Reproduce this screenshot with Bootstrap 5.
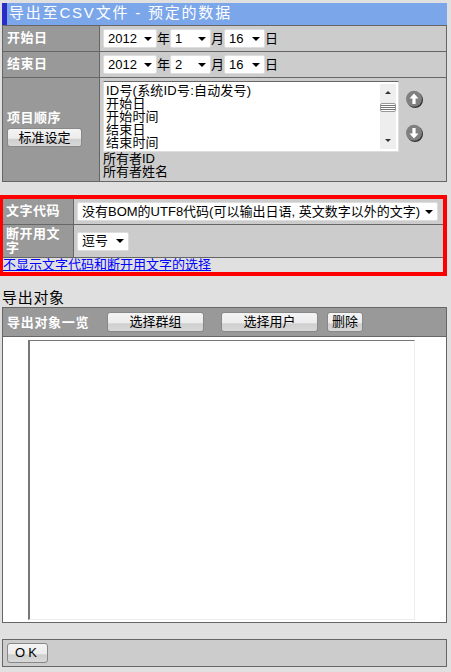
<!DOCTYPE html>
<html lang="zh">
<head>
  <meta charset="UTF-8">
  <meta name="viewport" content="width=device-width, initial-scale=1.0">
  <title>导出至CSV文件</title>
  <link href="https://cdn.jsdelivr.net/npm/bootstrap@5.3.0/dist/css/bootstrap.min.css" rel="stylesheet">
  <style>
    body {
      background-color: #e0e0e0;
      color: #000;
      font-family: "Liberation Sans", "Noto Sans CJK SC", sans-serif;
      font-size: 13px;
      line-height: 13px;
      padding: 3px 4px 0 2px;
      overflow: hidden;
    }
    .page-title {
      height: 22px;
      background-color: #7ba6ea;
      border-left: 5px solid #2b2bc8;
      color: #fff;
      font-size: 15px;
      line-height: 20px;
      letter-spacing: 1.8px;
      padding-left: 2px;
    }
    .form-tbl {
      border: 1px solid #666;
      background-color: #ccc;
    }
    .form-row {
      display: flex;
      border-bottom: 1px solid #666;
    }
    .form-row:last-child { border-bottom: 0; }
    .form-label-cell {
      flex: 0 0 97px;
      background-color: #999;
      border-right: 1px solid #666;
      color: #fff;
      font-weight: bold;
      padding-left: 4px;
      letter-spacing: .5px;
    }
    .label-mid { padding-bottom: 2px; }
    .form-value-cell { flex: 1 1 auto; min-width: 0; padding-left: 3px; background-color: #ccc; }
    .row-date { height: 26px; }
    .sel {
      appearance: none;
      -webkit-appearance: none;
      height: 19px;
      border: 1px solid #ddd;
      border-radius: 2px;
      padding: 0 0 0 4px;
      font-family: inherit;
      font-size: 13px;
      line-height: 16px;
      color: #000;
      background: #fff url("data:image/svg+xml,%3Csvg xmlns='http://www.w3.org/2000/svg' width='8' height='4'%3E%3Cpath d='M0 0h8L4 4z' fill='%23000'/%3E%3C/svg%3E") no-repeat right 4px center;
    }
    .sel-year { width: 54px; }
    .sel-num { width: 41px; }
    .sel-wide { width: 361px; }
    .sel-short { width: 52px; }
    .date-unit { width: 13px; text-align: center; }
    .row-order { height: 103px; }
    .order-label { padding-top: 33px; }
    .order-cell { padding-top: 3px; }
    .order-list {
      width: 296px;
      height: 71px;
      background-color: #fff;
      border: 1px solid #ddd;
      border-top-color: #666;
      padding: 2px 3px 3px 2px;
      position: relative;
      letter-spacing: .2px;
    }
    .list-scroll {
      position: absolute;
      right: 2px;
      top: 2px;
      bottom: 2px;
      width: 16px;
      background-color: #eee;
    }
    .scroll-up, .scroll-down {
      position: absolute;
      left: 5px;
      width: 0;
      height: 0;
      border-left: 3px solid transparent;
      border-right: 3px solid transparent;
    }
    .scroll-up { top: 7px; border-bottom: 3px solid #333; }
    .scroll-down { bottom: 7px; border-top: 3px solid #333; }
    .scroll-thumb {
      position: absolute;
      left: 0;
      top: 19px;
      width: 16px;
      height: 9px;
      border: 1px solid #999;
      border-radius: 2px;
      background: repeating-linear-gradient(#fff 0, #fff 1px, #777 1px, #777 2px);
    }
    .move-btns { width: 18px; margin: 9px 0 0 6px; gap: 16px; }
    .round-btn { display: block; width: 19px; height: 18px; }
    .gray-btn {
      display: inline-block;
      height: 20px;
      padding: 0;
      border: 1px solid #888;
      border-radius: 3px;
      background: linear-gradient(#f4f4f4 0, #ececec 55%, #cfcfcf 60%, #d8d8d8 100%);
      color: #000;
      font-family: inherit;
      font-size: 13px;
      line-height: 16px;
      text-align: center;
    }
    .btn-std { width: 75px; height: 19px; margin-top: 4px; font-weight: normal; letter-spacing: 0; }
    .red-box {
      border: 4px solid #f00;
      border-left-width: 3px;
      margin: 13px 0 0 -2px;
      width: 447px;
    }
    .red-box .form-label-cell { flex-basis: 71px; padding-left: 3px; }
    .row-code { height: 26px; }
    .row-sep { height: 33px; }
    .row-sep .form-label-cell { line-height: 14px; padding-top: 2px; }
    .red-box .form-row:last-of-type { border-bottom: 1px solid #666; }
    .link-row { height: 14px; background-color: #e0e0e0; line-height: 13px; }
    .link-row a { color: #00f; }
    .section-head { font-size: 15px; line-height: 15px; margin-top: 14px; height: 17px; letter-spacing: .7px; }
    .target-tbl { border: 1px solid #666; height: 316px; }
    .target-head {
      height: 29px;
      background-color: #999;
      border-bottom: 1px solid #666;
      padding-left: 4px;
    }
    .target-title { width: 100px; color: #fff; font-weight: bold; white-space: nowrap; letter-spacing: .7px; }
    .btn-pick { width: 97px; }
    .btn-pick-next { margin-left: 17px; }
    .btn-del { width: 36px; margin-left: 9px; }
    .target-body { height: 285px; background-color: #fff; padding: 3px 0 2px 25px; }
    .target-list {
      width: 387px;
      height: 100%;
      border-left: 2px solid #777;
      border-top: 1px solid #777;
      border-right: 1px solid #eee;
      border-bottom: 1px solid #eee;
    }
    .ok-bar {
      height: 28px;
      margin-top: 16px;
      background-color: #ccc;
      border: 1px solid #666;
      padding-left: 4px;
    }
    .btn-ok { width: 41px; letter-spacing: 3px; }
  </style>
</head>
<body>
  <div class="page-title">导出至CSV文件 - 预定的数据</div>

  <div class="form-tbl">
    <div class="form-row row-date">
      <div class="form-label-cell label-mid d-flex align-items-center">开始日</div>
      <div class="form-value-cell d-flex align-items-center">
        <select class="sel sel-year"><option>2012</option></select><span class="date-unit">年</span>
        <select class="sel sel-num"><option>1</option></select><span class="date-unit">月</span>
        <select class="sel sel-num"><option>16</option></select><span class="date-unit">日</span>
      </div>
    </div>
    <div class="form-row row-date">
      <div class="form-label-cell label-mid d-flex align-items-center">结束日</div>
      <div class="form-value-cell d-flex align-items-center">
        <select class="sel sel-year"><option>2012</option></select><span class="date-unit">年</span>
        <select class="sel sel-num"><option>2</option></select><span class="date-unit">月</span>
        <select class="sel sel-num"><option>16</option></select><span class="date-unit">日</span>
      </div>
    </div>
    <div class="form-row row-order">
      <div class="form-label-cell order-label">
        <div>项目顺序</div>
        <button type="button" class="gray-btn btn-std">标准设定</button>
      </div>
      <div class="form-value-cell order-cell">
        <div class="d-flex">
          <div class="order-list">
            <div>ID号(系统ID号:自动发号)</div>
            <div>开始日</div>
            <div>开始时间</div>
            <div>结束日</div>
            <div>结束时间</div>
            <div class="list-scroll">
              <span class="scroll-up"></span>
              <span class="scroll-thumb"></span>
              <span class="scroll-down"></span>
            </div>
          </div>
          <div class="move-btns d-flex flex-column">
            <svg class="round-btn" viewBox="0 0 19 18"><circle cx="10" cy="10" r="8" fill="#333"/><circle cx="9" cy="8.800" r="8" fill="#808080"/><path d="M9 3.500 13.500 8.500H10.600V14H7.400V8.500H4.500Z" fill="#fff"/></svg>
            <svg class="round-btn" viewBox="0 0 19 18"><circle cx="10" cy="10" r="8" fill="#333"/><circle cx="9" cy="8.800" r="8" fill="#808080"/><path d="M9 14.500 13.500 9.500H10.600V4H7.400V9.500H4.500Z" fill="#fff"/></svg>
          </div>
        </div>
        <div>所有者ID</div>
        <div>所有者姓名</div>
      </div>
    </div>
  </div>

  <div class="red-box">
    <div class="form-row row-code">
      <div class="form-label-cell label-mid d-flex align-items-center">文字代码</div>
      <div class="form-value-cell d-flex align-items-center">
        <select class="sel sel-wide"><option>没有BOM的UTF8代码(可以输出日语, 英文数字以外的文字)</option></select>
      </div>
    </div>
    <div class="form-row row-sep">
      <div class="form-label-cell">断开用文字</div>
      <div class="form-value-cell d-flex align-items-center">
        <select class="sel sel-short"><option>逗号</option></select>
      </div>
    </div>
    <div class="link-row"><a href="#">不显示文字代码和断开用文字的选择</a></div>
  </div>

  <div class="section-head">导出对象</div>
  <div class="target-tbl">
    <div class="target-head d-flex align-items-center">
      <div class="target-title">导出对象一览</div>
      <button type="button" class="gray-btn btn-pick">选择群组</button>
      <button type="button" class="gray-btn btn-pick btn-pick-next">选择用户</button>
      <button type="button" class="gray-btn btn-del">删除</button>
    </div>
    <div class="target-body">
      <div class="target-list"></div>
    </div>
  </div>

  <div class="ok-bar d-flex align-items-center">
    <button type="button" class="gray-btn btn-ok">OK</button>
  </div>

  <script src="https://cdn.jsdelivr.net/npm/bootstrap@5.3.0/dist/js/bootstrap.bundle.min.js"></script>
</body>
</html>
